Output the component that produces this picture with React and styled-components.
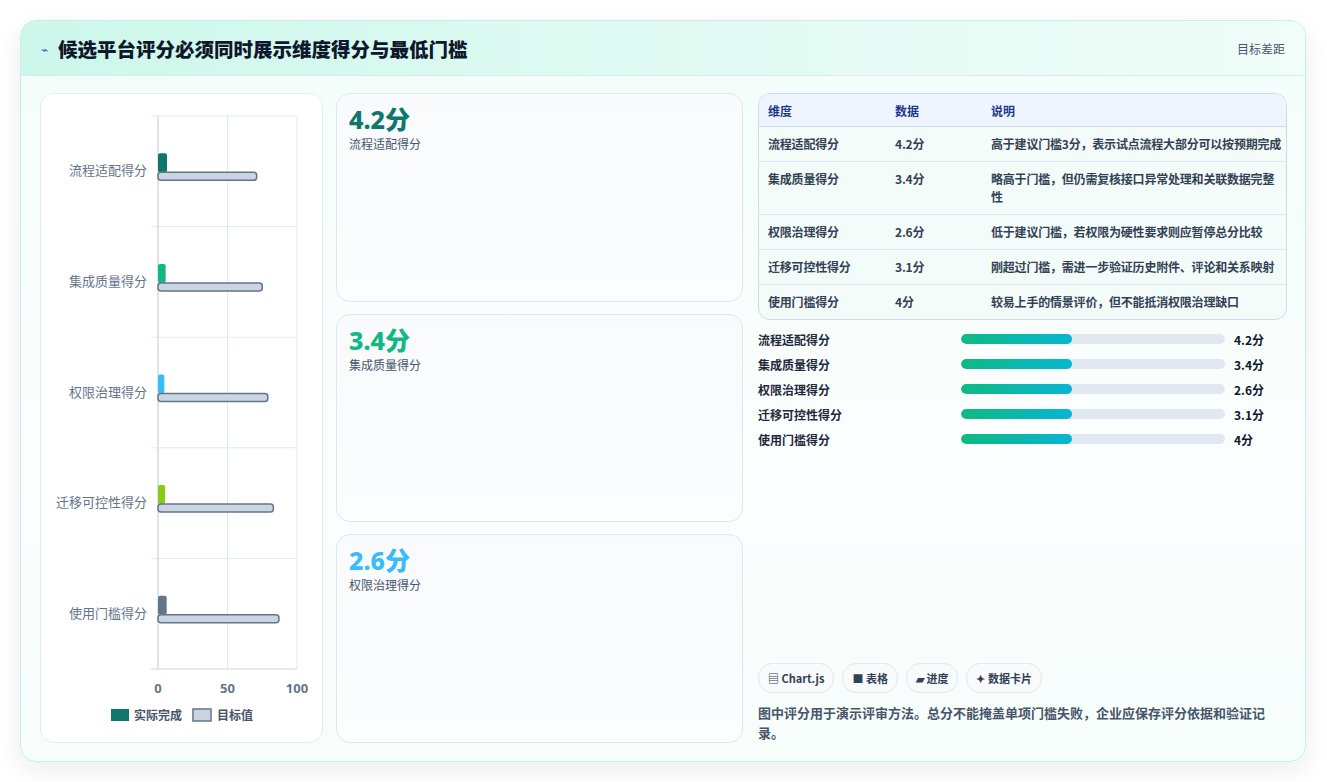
import React from 'react';
import styled, { createGlobalStyle } from 'styled-components';

const rows = [
  { name: '流程适配得分', value: 4.2, unit: '4.2分', target: 71, color: '#0f766e', note: '高于建议门槛3分，表示试点流程大部分可以按预期完成' },
  { name: '集成质量得分', value: 3.4, unit: '3.4分', target: 75, color: '#10b981', note: '略高于门槛，但仍需复核接口异常处理和关联数据完整性' },
  { name: '权限治理得分', value: 2.6, unit: '2.6分', target: 79, color: '#38bdf8', note: '低于建议门槛，若权限为硬性要求则应暂停总分比较' },
  { name: '迁移可控性得分', value: 3.1, unit: '3.1分', target: 83, color: '#84cc16', note: '刚超过门槛，需进一步验证历史附件、评论和关系映射' },
  { name: '使用门槛得分', value: 4, unit: '4分', target: 87, color: '#64748b', note: '较易上手的情景评价，但不能抵消权限治理缺口' },
];

const cards = [
  { v: '4.2分', l: '流程适配得分', c: '#0f766e' },
  { v: '3.4分', l: '集成质量得分', c: '#10b981' },
  { v: '2.6分', l: '权限治理得分', c: '#38bdf8' },
];

const GlobalStyle = createGlobalStyle`
  html, body { margin: 0; background: #fff; }
  body { font-family: "Noto Sans CJK SC", "Noto Sans", sans-serif; color: #0f172a; }
`;

const Page = styled.div`
  padding: 20px 21px 20px 20px;
  height: 782px;
  box-sizing: border-box;
`;

const Frame = styled.div`
  height: 742px;
  box-sizing: border-box;
  border: 1px solid #c7f0e4;
  border-radius: 16px;
  background: linear-gradient(180deg, #f2fdf9, #fbfefe 60%, #f6fdfb);
  box-shadow: 0 8px 24px rgba(15, 23, 42, 0.08);
  display: flex;
  flex-direction: column;
  overflow: hidden;
`;

const Header = styled.div`
  height: 55px;
  flex: none;
  box-sizing: border-box;
  display: flex;
  align-items: center;
  justify-content: space-between;
  padding: 0 20px;
  background: linear-gradient(90deg, #ccf7ea, #e4fbf4 60%, #f0fdf9);
  border-bottom: 1px solid #d5efe8;
`;

const Title = styled.h1`
  margin: 0;
  font-size: 19.5px;
  font-weight: 800;
  color: #0f172a;
  display: flex;
  align-items: center;
  gap: 10px;
`;

const Spark = styled.span`
  color: #2563eb;
  font-size: 12px;
  font-weight: 400;
`;

const HeaderNote = styled.span`
  font-size: 12px;
  color: #475569;
`;

const Body = styled.div`
  flex: 1;
  display: grid;
  grid-template-columns: 283px 407px 1fr;
  gap: 13px;
  padding: 17px 18px 18px 19px;
  min-height: 0;
`;

const Panel = styled.div`
  background: #fff;
  border: 1px solid #e2ecf0;
  border-radius: 14px;
`;

const Stack = styled.div`
  display: grid;
  grid-template-rows: repeat(3, 1fr);
  gap: 12px;
`;

const MetricCard = styled.div`
  background: linear-gradient(180deg, #f8fafc, #fbfdff);
  border: 1px solid #dbe7f0;
  border-radius: 14px;
  padding: 10px 12px;
`;

const MetricValue = styled.div`
  font-family: "Noto Sans", "Noto Sans CJK SC", sans-serif;
  font-size: 25px;
  font-weight: 800;
  line-height: 30px;
  color: ${p => p.$c};
`;

const MetricLabel = styled.div`
  font-size: 12px;
  color: #475569;
  margin-top: 1px;
`;

const Right = styled.div`
  display: flex;
  flex-direction: column;
  padding-left: 2px;
`;

const TableWrap = styled.div`
  border: 1px solid #cfdbe6;
  border-radius: 12px;
  overflow: hidden;
  background: #f4fcf9;
`;

const Table = styled.table`
  width: 100%;
  border-collapse: collapse;
  font-size: 12px;
  th {
    background: #eef5fe;
    color: #1e3a8a;
    font-weight: 700;
    text-align: left;
    height: 32px;
    padding: 0 9px;
    border-bottom: 1px solid #cfdbe6;
  }
  td {
    color: #334155;
    font-weight: 600;
    padding: 8px 2px 8px 9px;
    vertical-align: top;
    line-height: 18px;
    letter-spacing: -0.2px;
    border-bottom: 1px solid #dde7ee;
  }
  tr:last-child td { border-bottom: none; }
`;

const Bars = styled.div`
  display: flex;
  flex-direction: column;
  gap: 7px;
  margin-top: 10px;
`;

const BarRow = styled.div`
  display: grid;
  grid-template-columns: 194px 264px 1fr;
  align-items: center;
  column-gap: 9px;
  font-size: 12px;
  font-weight: 600;
  color: #1e293b;
  height: 18px;
`;

const Track = styled.div`
  height: 10px;
  border-radius: 5px;
  background: #e2e8f0;
  overflow: hidden;
`;

const Fill = styled.div`
  height: 100%;
  border-radius: 5px;
  background: linear-gradient(90deg, #10b981, #06b6d4);
`;

const BarValue = styled.span`
  font-weight: 700;
  color: #0f172a;
`;

const Footer = styled.div`
  margin-top: auto;
`;

const Chips = styled.div`
  display: flex;
  gap: 8px;
`;

const Chip = styled.span`
  display: inline-flex;
  align-items: center;
  gap: 3px;
  height: 28px;
  padding: 0 9px;
  border: 1px solid #e2e8f0;
  border-radius: 14px;
  background: #f8fafc;
  font-size: 11px;
  font-weight: 700;
  color: #334155;
`;

const Note = styled.p`
  margin: 10px 0 0;
  font-size: 13px;
  line-height: 20px;
  font-weight: 600;
  color: #475569;
`;

function Chart() {
  const x0 = 117, x1 = 256, top = 22, bottom = 575;
  const band = (bottom - top) / rows.length;
  const sx = v => x0 + (v / 100) * (x1 - x0);
  return (
    <svg width="281" height="648" style={{ display: 'block' }}>
      {[0, 50, 100].map(t => (
        <line key={t} x1={sx(t)} x2={sx(t)} y1={top} y2={bottom} stroke="#e2e8f0" />
      ))}
      {rows.map((_, i) => (
        <line key={i} x1={110} x2={x1} y1={top + band * i} y2={top + band * i} stroke="#e5e9f0" />
      ))}
      <line x1={110} x2={x1} y1={bottom} y2={bottom} stroke="#cbd5e1" />
      <line x1={x0} x2={x0} y1={top} y2={bottom} stroke="#cbd5e1" />
      {rows.map((r, i) => {
        const cy = top + band * i + band / 2;
        return (
          <g key={r.name}>
            <text x={106} y={cy + 4} textAnchor="end" fontSize="13" fill="#64748b">{r.name}</text>
            <rect x={x0} y={cy - 18} width={sx(r.value * 1.2) - x0 + 2} height={19} rx={2} fill={r.color} />
            <rect x={x0} y={cy + 1} width={sx(r.target) - x0} height={8} rx={3} fill="#cbd5e1" stroke="#64748b" strokeWidth="1.5" />
          </g>
        );
      })}
      {[0, 50, 100].map(t => (
        <text key={t} x={sx(t)} y={599} textAnchor="middle" fontSize="13" fontWeight="700" fill="#64748b" fontFamily="Noto Sans, sans-serif">{t}</text>
      ))}
      <rect x={70} y={615} width={18} height={12} fill="#0f766e" />
      <text x={93} y={626} fontSize="12" fill="#475569" fontWeight="600">实际完成</text>
      <rect x={152} y={615} width={18} height={12} fill="#cbd5e1" stroke="#64748b" strokeWidth="1.5" />
      <text x={176} y={626} fontSize="12" fill="#475569" fontWeight="600">目标值</text>
    </svg>
  );
}

export default function App() {
  return (
    <Page>
      <GlobalStyle />
      <Frame>
        <Header>
          <Title><Spark>⌁</Spark>候选平台评分必须同时展示维度得分与最低门槛</Title>
          <HeaderNote>目标差距</HeaderNote>
        </Header>
        <Body>
          <Panel><Chart /></Panel>
          <Stack>
            {cards.map(c => (
              <MetricCard key={c.l}>
                <MetricValue $c={c.c}>{c.v}</MetricValue>
                <MetricLabel>{c.l}</MetricLabel>
              </MetricCard>
            ))}
          </Stack>
          <Right>
            <TableWrap>
              <Table>
                <thead>
                  <tr><th style={{ width: 109 }}>维度</th><th style={{ width: 78 }}>数据</th><th>说明</th></tr>
                </thead>
                <tbody>
                  {rows.map(r => (
                    <tr key={r.name}><td>{r.name}</td><td>{r.unit}</td><td>{r.note}</td></tr>
                  ))}
                </tbody>
              </Table>
            </TableWrap>
            <Bars>
              {rows.map(r => (
                <BarRow key={r.name}>
                  <span>{r.name}</span>
                  <Track><Fill style={{ width: '42%' }} /></Track>
                  <BarValue>{r.unit}</BarValue>
                </BarRow>
              ))}
            </Bars>
            <Footer>
              <Chips>
                <Chip>▤ Chart.js</Chip>
                <Chip>■ 表格</Chip>
                <Chip>▰ 进度</Chip>
                <Chip>✦ 数据卡片</Chip>
              </Chips>
              <Note>图中评分用于演示评审方法。总分不能掩盖单项门槛失败，企业应保存评分依据和验证记录。</Note>
            </Footer>
          </Right>
        </Body>
      </Frame>
    </Page>
  );
}
